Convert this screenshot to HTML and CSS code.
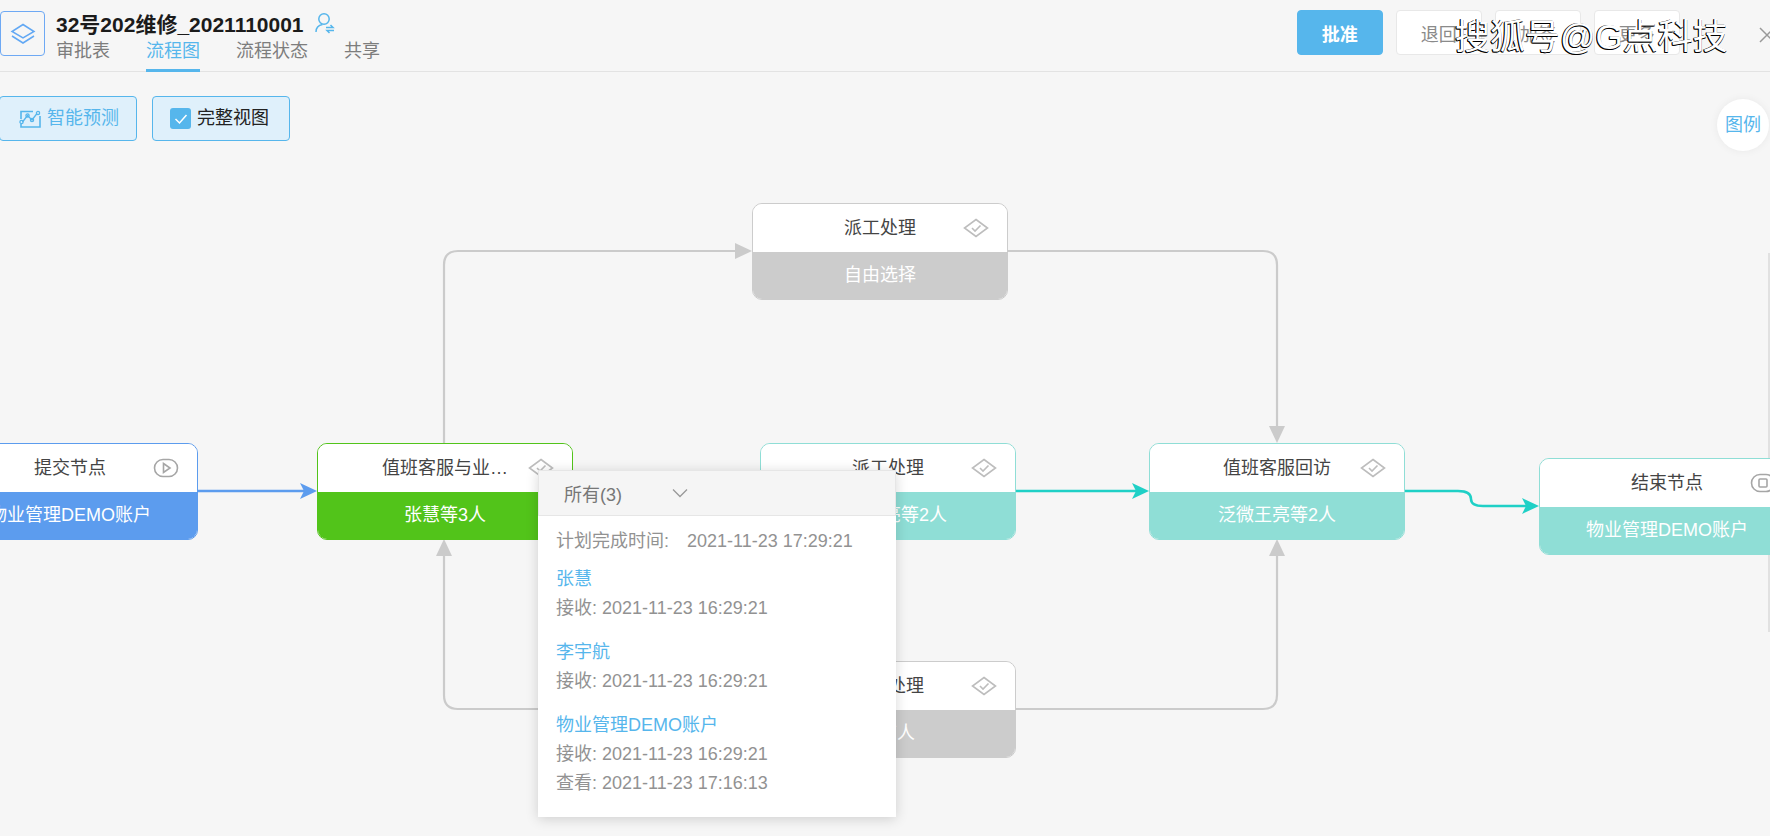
FILE: index.html
```html
<!DOCTYPE html>
<html lang="zh-CN">

<head>
    <meta charset="UTF-8">
    <title>流程图</title>
    <link rel="stylesheet" href="styles.css">
</head>

<body>
    <div class="page">
        <!-- Diagram canvas -->
        <div class="flow">
            <svg class="lines" width="1770" height="836" viewBox="0 0 1770 836">
                <g class="line-grey">
                    <path d="M444 443V265Q444 251 458 251H740" />
                    <path d="M1007 251H1263Q1277 251 1277 265V430" />
                    <path d="M538 709H458Q444 709 444 695V553" />
                    <path d="M1015 709H1263Q1277 709 1277 695V553" />
                </g>
                <g class="head-grey">
                    <polygon points="752,251 735,243 735,259" />
                    <polygon points="1277,443 1269,426 1285,426" />
                    <polygon points="444,539 436,556 452,556" />
                    <polygon points="1277,539 1269,556 1285,556" />
                </g>
                <path class="line-blue" d="M198 491H306" />
                <polygon class="head-blue" points="317,491 300,483 304,491 300,499" />
                <g class="line-teal">
                    <path d="M1015 491H1136" />
                    <path d="M1405 491H1458Q1471 491 1471 499Q1471 506 1483 506H1528" />
                </g>
                <g class="head-teal">
                    <polygon points="1149,491 1132,483 1136,491 1132,499" />
                    <polygon points="1539,506 1522,498 1526,506 1522,514" />
                </g>
                <line class="edge" x1="1769" y1="253" x2="1769" y2="632" />
            </svg>

            <div class="node node-submit">
                <div class="node-head">提交节点
                    <svg class="node-icon" width="26" height="20" viewBox="0 0 26 20">
                        <rect x="1.5" y="1.5" width="23" height="17" rx="8.5" />
                        <path d="M10.5 5.5L17 10L10.5 14.5Z" />
                    </svg>
                </div>
                <div class="node-foot">物业管理DEMO账户</div>
            </div>

            <div class="node node-green node-b">
                <div class="node-head">值班客服与业…
                    <svg class="node-icon" width="26" height="20" viewBox="0 0 26 20">
                        <path d="M13 1.5L24.5 10L13 18.5L1.5 10Z" />
                        <path d="M9 10L12 13L17.5 7.5" />
                    </svg>
                </div>
                <div class="node-foot">张慧等3人</div>
            </div>

            <div class="node node-grey node-c">
                <div class="node-head">派工处理
                    <svg class="node-icon" width="26" height="20" viewBox="0 0 26 20">
                        <path d="M13 1.5L24.5 10L13 18.5L1.5 10Z" />
                        <path d="M9 10L12 13L17.5 7.5" />
                    </svg>
                </div>
                <div class="node-foot">自由选择</div>
            </div>

            <div class="node node-teal node-d">
                <div class="node-head">派工处理
                    <svg class="node-icon" width="26" height="20" viewBox="0 0 26 20">
                        <path d="M13 1.5L24.5 10L13 18.5L1.5 10Z" />
                        <path d="M9 10L12 13L17.5 7.5" />
                    </svg>
                </div>
                <div class="node-foot">泛微王亮等2人</div>
            </div>

            <div class="node node-teal node-e">
                <div class="node-head">值班客服回访
                    <svg class="node-icon" width="26" height="20" viewBox="0 0 26 20">
                        <path d="M13 1.5L24.5 10L13 18.5L1.5 10Z" />
                        <path d="M9 10L12 13L17.5 7.5" />
                    </svg>
                </div>
                <div class="node-foot">泛微王亮等2人</div>
            </div>

            <div class="node node-teal node-f">
                <div class="node-head">结束节点
                    <svg class="node-icon" width="26" height="20" viewBox="0 0 26 20">
                        <rect x="1.5" y="1.5" width="23" height="17" rx="8.5" />
                        <rect x="9" y="6" width="8" height="8" rx="1" />
                    </svg>
                </div>
                <div class="node-foot">物业管理DEMO账户</div>
            </div>

            <div class="node node-grey node-g">
                <div class="node-head">派工处理
                    <svg class="node-icon" width="26" height="20" viewBox="0 0 26 20">
                        <path d="M13 1.5L24.5 10L13 18.5L1.5 10Z" />
                        <path d="M9 10L12 13L17.5 7.5" />
                    </svg>
                </div>
                <div class="node-foot">所有人</div>
            </div>

            <!-- Approver popup -->
            <div class="popup">
                <div class="popup-select">
                    <span>所有(3)</span>
                    <svg width="18" height="10" viewBox="0 0 18 10">
                        <path d="M2 1.5L9 8.5L16 1.5" />
                    </svg>
                </div>
                <div class="popup-body">
                    <p class="plan"><span>计划完成时间:</span><span>2021-11-23 17:29:21</span></p>
                    <div class="person">
                        <p class="name">张慧</p>
                        <p>接收: 2021-11-23 16:29:21</p>
                    </div>
                    <div class="person">
                        <p class="name">李宇航</p>
                        <p>接收: 2021-11-23 16:29:21</p>
                    </div>
                    <div class="person">
                        <p class="name">物业管理DEMO账户</p>
                        <p>接收: 2021-11-23 16:29:21</p>
                        <p>查看: 2021-11-23 17:16:13</p>
                    </div>
                </div>
            </div>
        </div>

        <!-- Top bar -->
        <div class="topbar">
            <div class="app-icon">
                <svg width="26" height="22" viewBox="0 0 26 22">
                    <path d="M13 1.5L24 8.5L13 15L2 8.5Z" />
                    <path d="M2 13L13 20L24 13" />
                </svg>
            </div>
            <div class="title-block">
                <div class="title">32号202维修_2021110001
                    <svg class="user-icon" width="20" height="22" viewBox="0 0 20 22">
                        <circle cx="9" cy="7" r="5.2" />
                        <path d="M1 20C1 15.5 4 13.2 7.5 12.6" />
                        <path d="M11 15.5H18L15.5 13" />
                        <path d="M19 18.5H12L14.5 21" />
                    </svg>
                </div>
                <div class="tabs">
                    <a class="tab">审批表</a>
                    <a class="tab active">流程图</a>
                    <a class="tab">流程状态</a>
                    <a class="tab">共享</a>
                </div>
            </div>
            <div class="actions">
                <button class="btn btn-primary">批准</button>
                <button class="btn">退回</button>
                <button class="btn">加签</button>
                <button class="btn">更多</button>
            </div>
            <svg class="close" width="16" height="16" viewBox="0 0 16 16">
                <path d="M1 1L15 15M15 1L1 15" />
            </svg>
        </div>

        <!-- Toolbar -->
        <div class="toolbar">
            <button class="tool tool-predict">
                <svg width="22" height="18" viewBox="0 0 22 18">
                    <path class="frame" d="M14 1.5H2V9M2 14V17H21V6" />
                    <path d="M3.5 12L8.5 5.5L13 10L18 3.5" />
                    <circle cx="2.5" cy="12" r="1.6" />
                    <circle cx="8.5" cy="5.5" r="1.6" />
                    <circle cx="13" cy="10" r="1.6" />
                    <circle cx="19" cy="3" r="1.6" />
                </svg>
                智能预测
            </button>
            <button class="tool tool-full">
                <span class="check">
                    <svg width="14" height="12" viewBox="0 0 14 12">
                        <path d="M1.5 6L5.5 10L12.5 2" />
                    </svg>
                </span>
                完整视图
            </button>
        </div>

        <div class="legend">图例</div>
        <div class="watermark">搜狐号@G点科技</div>
    </div>
</body>

</html>
```

FILE: styles.css
```css
* {
    margin: 0;
    padding: 0;
    box-sizing: border-box;
    font-family: "Liberation Sans", "Noto Sans CJK SC", sans-serif;
}

body {
    background: #f6f6f6;
    overflow: hidden;
}

.page {
    position: relative;
    width: 1770px;
    height: 836px;
    overflow: hidden;
    font-size: 18px;
}

/* Top bar */
.topbar {
    position: relative;
    display: flex;
    height: 72px;
    border-bottom: 1px solid #e3e3e3;
}

.app-icon {
    display: flex;
    align-items: center;
    justify-content: center;
    width: 45px;
    height: 45px;
    margin-top: 11px;
    margin-right: 11px;
    border: 1px solid #6ea9f4;
    border-radius: 4px;
}

.app-icon svg path {
    fill: none;
    stroke: #62a8f4;
    stroke-width: 1.5;
}

.title {
    display: flex;
    align-items: center;
    gap: 11px;
    height: 25px;
    margin-top: 10px;
    font-size: 21px;
    font-weight: bold;
    color: #1b1b1b;
    white-space: nowrap;
}

.user-icon {
    fill: none;
    stroke: #56b6ec;
    stroke-width: 1.5;
}

.tabs {
    display: flex;
    gap: 36px;
}

.tab {
    height: 37px;
    line-height: 32px;
    color: #7d7d7d;
    border-bottom: 3px solid transparent;
}

.tab.active {
    color: #56b6ec;
    border-bottom-color: #56b6ec;
}

.actions {
    display: flex;
    gap: 12.5px;
    margin-top: 10px;
    margin-left: auto;
}

.btn {
    width: 86.5px;
    height: 45px;
    background: #fff;
    border: 1px solid #e8e8e8;
    border-radius: 4px;
    color: #8a8a8a;
    font-size: 18px;
}

.btn-primary {
    background: #56b6ec;
    border-color: #56b6ec;
    color: #fff;
    font-weight: bold;
}

.close {
    flex: none;
    margin-top: 27px;
    margin-left: 79px;
    margin-right: -5px;
    fill: none;
    stroke: #999;
    stroke-width: 1.5;
}

/* Toolbar */
.toolbar {
    position: relative;
    display: flex;
    gap: 15px;
    margin-top: 24px;
    margin-left: -1px;
}

.tool {
    display: flex;
    align-items: center;
    height: 45px;
    line-height: 43px;
    background: #dff0fb;
    border: 1px solid #56b6ec;
    border-radius: 4px;
    font-size: 18px;
}

.tool-predict {
    width: 138px;
    gap: 6px;
    padding-left: 19px;
    color: #56b6ec;
}

.tool-predict svg {
    fill: none;
    stroke: #56b6ec;
    stroke-width: 1.3;
}

.tool-predict .frame {
    stroke-width: 1.6;
}

.tool-full {
    width: 138px;
    gap: 6px;
    padding-left: 17px;
    color: #222;
}

.check {
    display: flex;
    align-items: center;
    justify-content: center;
    width: 21px;
    height: 21px;
    background: #56b6ec;
    border-radius: 3px;
}

.check svg {
    fill: none;
    stroke: #fff;
    stroke-width: 1.5;
}

/* Flow diagram */
.flow {
    position: absolute;
    top: 0;
    left: 0;
    width: 1770px;
    height: 836px;
}

.lines {
    position: absolute;
    top: 0;
    left: 0;
}

.line-grey path {
    fill: none;
    stroke: #cbcbcb;
    stroke-width: 2.2;
}

.head-grey polygon {
    fill: #cbcbcb;
}

.line-blue {
    fill: none;
    stroke: #5c9cee;
    stroke-width: 2.5;
}

.head-blue {
    fill: #5c9cee;
}

.line-teal path {
    fill: none;
    stroke: #1fd0c6;
    stroke-width: 2.5;
}

.head-teal polygon {
    fill: #1fd0c6;
}

.edge {
    stroke: #ccc;
    stroke-width: 1;
}

.node {
    position: absolute;
    width: 256px;
    height: 97px;
    border-radius: 10px;
    overflow: hidden;
    border: 1px solid #ccc;
}

.node-head {
    position: relative;
    height: 48px;
    line-height: 48px;
    text-align: center;
    background: #fff;
    color: #444;
}

.node-foot {
    height: 48px;
    line-height: 47px;
    text-align: center;
    color: #fff;
    background: #ccc;
}

.node-icon {
    position: absolute;
    top: 14px;
    right: 18px;
    fill: none;
    stroke: #bdbdbd;
    stroke-width: 1.6;
}

.node-submit .node-icon,
.node-f .node-icon {
    stroke: #a6a6a6;
}

.node-submit {
    top: 443px;
    left: -58px;
    border-color: #5c9cee;
}

.node-submit .node-foot {
    background: #5c9cee;
}

.node-green {
    border-color: #52c41a;
}

.node-green .node-foot {
    background: #52c41a;
}

.node-teal {
    border-color: #8fded6;
}

.node-teal .node-foot {
    background: #8fded6;
}

.node-b {
    top: 443px;
    left: 317px;
}

.node-c {
    top: 203px;
    left: 752px;
}

.node-d {
    top: 443px;
    left: 760px;
}

.node-e {
    top: 443px;
    left: 1149px;
}

.node-f {
    top: 458px;
    left: 1539px;
}

.node-g {
    top: 661px;
    left: 760px;
}

/* Popup */
.popup {
    position: absolute;
    top: 470px;
    left: 538px;
    width: 358px;
    height: 347px;
    background: #fff;
    box-shadow: 0 2px 12px rgba(0, 0, 0, 0.16);
}

.popup-select {
    display: flex;
    align-items: center;
    gap: 49px;
    height: 46px;
    padding-left: 25px;
    background: #f5f5f5;
    border: 1px solid #e6e6e6;
    color: #777;
}

.popup-select svg {
    fill: none;
    stroke: #999;
    stroke-width: 1.3;
}

.popup-body {
    padding: 11px 18px 0;
    line-height: 29px;
    color: #929292;
}

.plan {
    display: flex;
    gap: 18px;
    margin-bottom: 9px;
}

.person {
    margin-bottom: 15px;
}

.name {
    color: #56b6ec;
}

/* Legend and watermark */
.legend {
    position: absolute;
    top: 99px;
    left: 1717px;
    width: 52px;
    height: 52px;
    line-height: 52px;
    text-align: center;
    background: #fff;
    border-radius: 50%;
    color: #56b6ec;
    box-shadow: 0 0 8px rgba(0, 0, 0, 0.06);
}

.watermark {
    position: absolute;
    top: 14px;
    left: 1455px;
    font-size: 35px;
    line-height: 46px;
    color: #fff;
    white-space: nowrap;
    text-shadow: -1px 1px 0 #000, -1px 0 0 #000, 0 1px 0 #000;
}
```
